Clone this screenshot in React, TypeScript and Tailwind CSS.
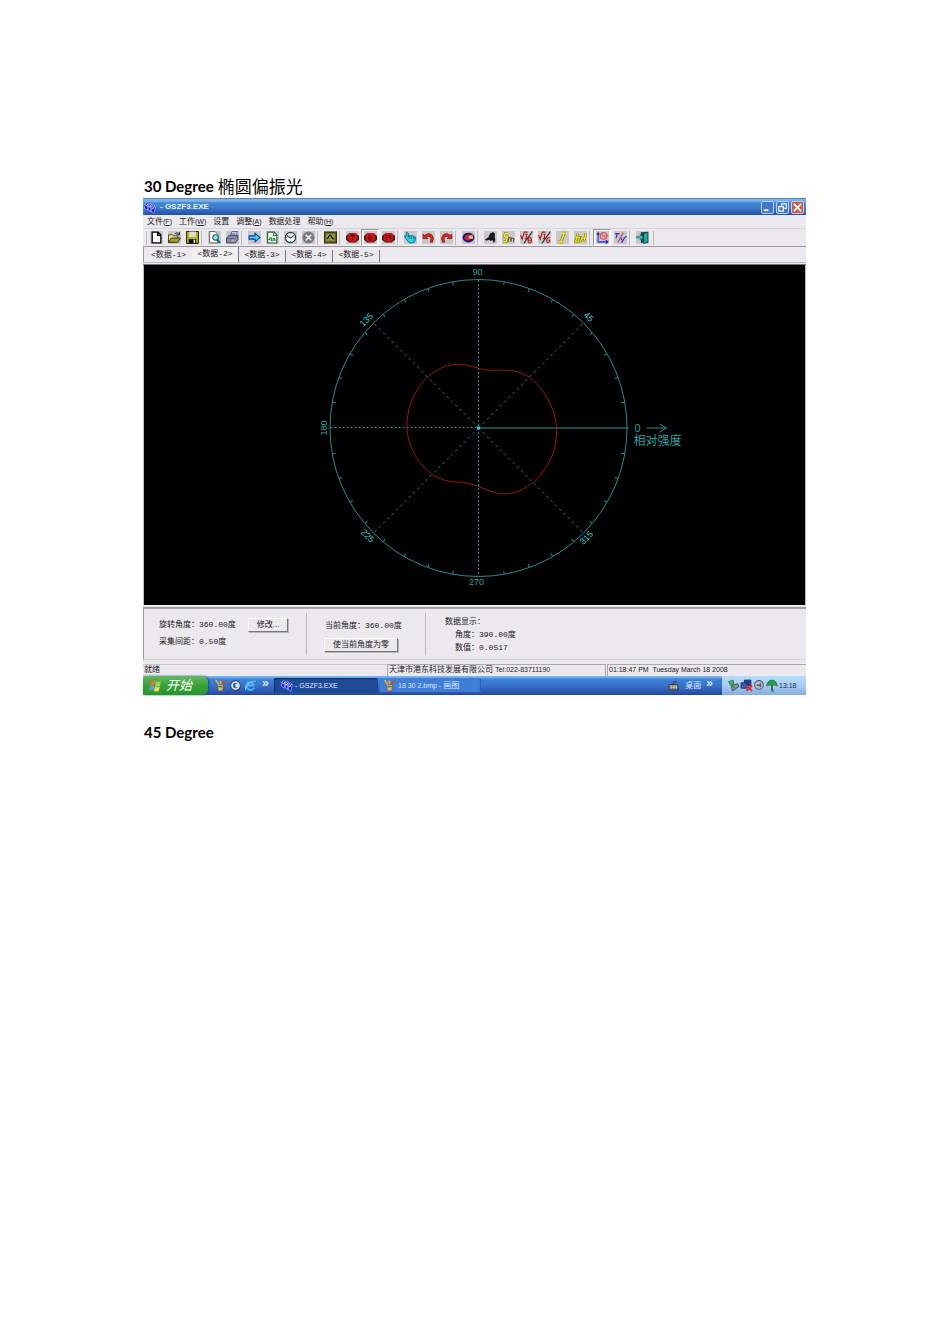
import type { ReactNode } from "react";

const mono = "font-['Liberation_Mono','Noto_Sans_CJK_SC',monospace]";
const sans = "font-['Liberation_Sans','Noto_Sans_CJK_SC',sans-serif]";

function Icon({ children, className = "bg-[#c8c7c9]" }: { children: ReactNode; className?: string }) {
  return (
    <svg viewBox="0 0 24 24" className={"w-[13px] h-[13px] shrink-0 " + className} aria-hidden="true">
      {children}
    </svg>
  );
}

const stop = (
  <>
    <path d="M6 4h12l6 5v7l-6 5H6l-6-5V9z" fill="#222" />
    <path d="M7 4h10l4 4v8l-4 4H7l-4-4V8z" fill="#d80f0f" />
  </>
);

const icons: Record<string, ReactNode> = {
  new: <path d="M4 2h11l5 5v15H4zM14 2v6h6" fill="#fff" stroke="#000" strokeWidth="2.4" />,
  open: (
    <>
      <path d="M1 21V7h7l2 2h8v4" fill="#f4ef7c" stroke="#333" strokeWidth="1.6" />
      <path d="M1 21l5-8h17l-5 8z" fill="#a5a21a" stroke="#222" strokeWidth="1.6" />
      <path d="M13 5q4-4 7 1M21 2v5h-5" fill="none" stroke="#111" strokeWidth="1.6" />
    </>
  ),
  save: (
    <>
      <path d="M1 1h22v22H1z" fill="#b5b50e" stroke="#111" strokeWidth="1.6" />
      <path d="M6 1h12v10H6z" fill="#dcdcdc" />
      <path d="M5 15h14v8H5z" fill="#111" />
      <path d="M14 16h3v6h-3z" fill="#eee" />
    </>
  ),
  preview: (
    <>
      <path d="M3 1h10l5 5v16H3z" fill="#fff" stroke="#555" strokeWidth="1.6" />
      <circle cx="14" cy="12" r="5" fill="#8fe3ea" stroke="#28636e" strokeWidth="2" />
      <path d="M17 16l5 6" stroke="#126675" strokeWidth="4" />
    </>
  ),
  print: (
    <>
      <path d="M8 9l3-8h10l-3 9z" fill="#fff" stroke="#4b4b88" strokeWidth="1.6" />
      <path d="M1 13l5-5h16v8l-5 6H1z" fill="#8d8da8" stroke="#333a66" strokeWidth="1.6" />
      <path d="M2 14h14l5-5M10 4h8M9 7h8" fill="none" stroke="#5252a0" strokeWidth="1.6" />
      <path d="M11 17h4" stroke="#e8e21b" strokeWidth="2" />
    </>
  ),
  go: <path d="M2 9h11V4l9 8-9 8v-5H2z" fill="#39d7f4" stroke="#153a91" strokeWidth="2" />,
  doc: (
    <>
      <path d="M3 2h12l5 5v15H3z" fill="#fff" stroke="#275c2c" strokeWidth="2" />
      <path d="M3 16h4v-3h3v5h3v-4h3v3h4M14 2v6h6" fill="none" stroke="#2b8a34" strokeWidth="2" />
    </>
  ),
  clock: (
    <>
      <circle cx="12" cy="12" r="9.5" fill="#f4fbff" stroke="#333" strokeWidth="2" />
      <path d="M5 8l7 5 6-5" fill="none" stroke="#245" strokeWidth="2" />
      <path d="M12 3v2M12 19v2M3 12h2M19 12h2" stroke="#278" strokeWidth="2" />
    </>
  ),
  cancel: (
    <>
      <circle cx="12" cy="12" r="11" fill="#7b7b7b" />
      <path d="M7 7l10 10M17 7L7 17" stroke="#f3f3f3" strokeWidth="3" />
    </>
  ),
  scope: (
    <>
      <path d="M1 2h22v20H1z" fill="#65651c" stroke="#333312" strokeWidth="2" />
      <path d="M4 5h16v13H4z" fill="#999a44" />
      <path d="M5 14q3 0 4-4 3-5 5 1 1 4 5 4" fill="none" stroke="#171700" strokeWidth="2.4" />
    </>
  ),
  stop1: (
    <>
      {stop}
      <path d="M8 8h8M12 8v8" stroke="#560000" strokeWidth="2" />
    </>
  ),
  stop2: (
    <>
      {stop}
      <path d="M9 8v8h6M10 12h5" fill="none" stroke="#560000" strokeWidth="2" />
    </>
  ),
  stop3: (
    <>
      {stop}
      <path d="M8 8v8M12 9h4v6M8 12h8" fill="none" stroke="#560000" strokeWidth="2" />
    </>
  ),
  hand: (
    <>
      <path d="M4 3q2-2 4 1v7l2-3 3 1 3-1 2 2 3 1v5q0 6-6 6h-5l-7-8-2-5 3 1z" fill="#20d5df" stroke="#086a83" strokeWidth="1.6" />
      <path d="M10 9v5M14 10v5M18 11v4" stroke="#086a83" strokeWidth="1.6" />
    </>
  ),
  undo: <path d="M2 14V6l3 2q7-6 13-1 6 6 1 14l-4-1q3-6 0-9-4-3-7 0l3 3z" fill="#e3261f" stroke="#67100e" strokeWidth="1.2" />,
  redo: <path d="M22 14V6l-3 2q-7-6-13-1-6 6-1 14l4-1q-3-6 0-9 4-3 7 0l-3 3z" fill="#e3261f" stroke="#67100e" strokeWidth="1.2" />,
  ball: (
    <>
      <ellipse cx="12" cy="12" rx="11" ry="9" fill="#26157e" />
      <path d="M4 13q3-9 11-6l4 4-5 6H7z" fill="#c72443" />
      <path d="M12 9l8-3v9l-8-1z" fill="#ef9a30" />
      <path d="M14 11h6v2h-6z" fill="#fff" />
    </>
  ),
  bird: <path d="M2 15l6-3 3-7q5-5 9-1v9l1 4-3 5-2-5-4 1-3-2-5 2z" fill="#16161c" />,
  smooth: (
    <>
      <path d="M11 4H6l-2 7h6l-2 9H2" fill="none" stroke="#77751b" strokeWidth="4.5" />
      <path d="M11 4H6l-2 7h6l-2 9H2" fill="none" stroke="#eeee22" strokeWidth="2.8" />
      <path d="M11 20l2-8 4 1-1 7 2-7 4 1-1 6" fill="none" stroke="#55551c" strokeWidth="2" />
    </>
  ),
  root1: (
    <>
      <path d="M1 8l3 7 4-13h6M10 6h4M12 5v9M9 14h5" fill="none" stroke="#b71c1c" strokeWidth="2.2" />
      <path d="M23 1L7 23" stroke="#222" strokeWidth="2" />
      <ellipse cx="18" cy="17" rx="3" ry="5" fill="none" stroke="#b71c1c" strokeWidth="2" />
      <path d="M15 17h6" stroke="#b71c1c" strokeWidth="2" />
    </>
  ),
  root2: (
    <>
      <path d="M1 8l3 7 4-13h6M10 6h4M12 5v9M9 14h5" fill="none" stroke="#b71c1c" strokeWidth="2.2" />
      <path d="M23 1L7 23" stroke="#222" strokeWidth="2" />
      <path d="M22 13q-5-2-6 4 0 5 4 4l2-4h-3" fill="none" stroke="#b71c1c" strokeWidth="2" />
    </>
  ),
  line: (
    <>
      <path d="M11 4h7M15 4L9 20M5 20h8" stroke="#66661b" strokeWidth="5" />
      <path d="M11 4h7M15 4L9 20M5 20h8" stroke="#f2ee17" strokeWidth="3" />
    </>
  ),
  bar: (
    <>
      <path d="M7 4L3 20h5l2-8H5M15 11l-3 9M22 4l-4 16M15 13h7" fill="none" stroke="#66661b" strokeWidth="4.2" />
      <path d="M7 4L3 20h5l2-8H5M15 11l-3 9M22 4l-4 16M15 13h7" fill="none" stroke="#f2ee17" strokeWidth="2.4" />
    </>
  ),
  polar: (
    <>
      <path d="M4 4v16h17M2 7l2-4 2 4M18 17l4 3-4 3" fill="none" stroke="#2428cd" strokeWidth="2" />
      <circle cx="14" cy="9" r="6" fill="none" stroke="#eb4848" strokeWidth="2" />
      <path d="M10 9h13M11 6l7 7" stroke="#eb4848" strokeWidth="1.6" />
    </>
  ),
  ratio: (
    <>
      <path d="M2 5h8M6 5L4 13M12 12l3 5M20 11l-6 11M22 9v3" fill="none" stroke="#3030ce" strokeWidth="2.2" />
      <path d="M17 3L7 21" stroke="#d63c55" strokeWidth="2" />
    </>
  ),
  exit: (
    <>
      <path d="M9 2h12v20H9z" fill="#1c4c4b" />
      <path d="M14 5l8-3v19l-8 2z" fill="#20a9a5" stroke="#063c3c" strokeWidth="1.4" />
      <path d="M1 10h7V6l5 6-5 5v-4H1z" fill="#26d8d8" stroke="#155" strokeWidth="1" />
    </>
  ),
};

const toolbar = [
  ["new", "open", "save"],
  ["preview", "print"],
  ["go", "doc", "clock", "cancel"],
  ["scope"],
  ["stop1", "stop2", "stop3"],
  ["hand", "undo", "redo"],
  ["ball"],
  ["bird", "smooth", "root1", "root2", "line", "bar"],
  ["polar", "ratio"],
  ["exit"],
];

const menus = [
  ["文件", "F"],
  ["工作", "W"],
  ["设置", ""],
  ["调整", "A"],
  ["数据处理", ""],
  ["帮助", "H"],
];

const tabs = ["<数据-1>", "<数据-2>", "<数据-3>", "<数据-4>", "<数据-5>"];

// measured intensity curve, relative to the pole
const curve = [
  [78, 0], [77.5, 12], [75, 24], [70, 35], [63.5, 45], [55, 54], [41.5, 62.5], [25, 66], [11.5, 63],
  [0, 58.5], [-12, 54.8], [-25, 53.8], [-35, 51.8], [-46, 46.5], [-55.5, 38], [-63, 28], [-69, 14.5],
  [-71.5, 0], [-70.8, -12], [-68, -24], [-62.5, -36], [-51, -51], [-35, -61], [-20, -63.7], [-8.5, -62],
  [0, -59.7], [8.5, -58], [20, -57.8], [31, -57.7], [40, -55.8], [51, -50.5], [63, -38.7], [72.5, -22.7],
  [76.5, -11],
];

function smoothPath(pts: number[][]) {
  const n = pts.length;
  let d = `M${pts[0][0]} ${pts[0][1]}`;
  for (let i = 0; i < n; i++) {
    const [p0, p1, p2, p3] = [pts[(i + n - 1) % n], pts[i], pts[(i + 1) % n], pts[(i + 2) % n]];
    d += `C${p1[0] + (p2[0] - p0[0]) / 6} ${p1[1] + (p2[1] - p0[1]) / 6} `;
    d += `${p2[0] - (p3[0] - p1[0]) / 6} ${p2[1] - (p3[1] - p1[1]) / 6} ${p2[0]} ${p2[1]}`;
  }
  return d + "Z";
}

function PolarChart() {
  const ticks = Array.from({ length: 36 }, (_, i) => i * 10).filter((a) => a % 90 !== 0);
  return (
    <svg viewBox="-334.5 -163 661 340" className="block w-full h-[340px] bg-black" role="img" aria-label="相对强度">
      <g stroke="#278c8c" fill="none">
        <circle r="148.5" />
        {ticks.map((a) => (
          <path key={a} d="M145 0H148.5" transform={`rotate(${a})`} />
        ))}
        <path d="M0 -148V148M-148 -0.5H0" strokeDasharray="2 2" />
        <path d="M0 0L104 -104M0 0L-104 -104M0 0L-104 104M0 0L104 104" strokeDasharray="3 3" stroke="#27807b" />
        <path d="M0 0H150" stroke="#29a0a0" />
        <path d="M168 0H188M181 -4L188 0L181 4" />
      </g>
      <path d={smoothPath(curve)} fill="none" stroke="#9c1717" />
      <path d="M-1.5 -1.5h3v3h-3z" fill="#35c8c8" />
      <g fill="#2aa3a3" fontSize="9" textAnchor="middle" className={sans}>
        <text x="-1" y="-153">90</text>
        <text x="-2" y="157">270</text>
        <text transform="translate(-152 0) rotate(-90)">180</text>
        <text transform="translate(-110 -106) rotate(-45)" fill="#35c8c8">135</text>
        <text transform="translate(108 -109) rotate(45)" fill="#35c8c8">45</text>
        <text transform="translate(-113 110) rotate(45)" fill="#35c8c8">225</text>
        <text transform="translate(110 112) rotate(-45)" fill="#35c8c8">315</text>
      </g>
      <g fill="#2aa3a3" className={sans}>
        <text x="156" y="4" fontSize="11">0</text>
        <text x="155" y="17" fontSize="12">相对强度</text>
      </g>
    </svg>
  );
}

function AppLogo() {
  return (
    <Icon className="">
      <path d="M2 7l6-5 3 4-2 11-6-3zM8 9l6-5 3 4-2 12-6-4zM14 11l6-4 3 4-3 12-6-5z" fill="#1a1ad8" stroke="#c6dcfa" strokeWidth="1" />
      <path d="M4 7l3 2 2-4M10 10l3 1 2-5M16 13l3 1 2-5" fill="none" stroke="#e6f1ff" strokeWidth="1.6" />
    </Icon>
  );
}

function PaintIcon() {
  return (
    <Icon className="">
      <path d="M6 10h12l-2 12H8z" fill="#d5bb8a" stroke="#6d5330" strokeWidth="1.4" />
      <path d="M9 10L3 2M12 10V3" stroke="#e6b13c" strokeWidth="3" />
      <path d="M15 10l6-7" stroke="#cd4331" strokeWidth="3" />
      <path d="M8 14h8" stroke="#3b875c" strokeWidth="3" />
    </Icon>
  );
}

function PushButton({ children }: { children: ReactNode }) {
  return (
    <button className={"h-[14px] px-[8px] border border-t-white border-l-white border-r-[#77767a] border-b-[#77767a] bg-[#ebe9ed] shadow-[1px_1px_0_#b9b8bc] flex items-center whitespace-nowrap " + sans}>
      {children}
    </button>
  );
}

const captionButton = "w-[13px] h-[13px] rounded-[2px] border border-[#b9d3f5] flex items-center justify-center";

export default function App() {
  return (
    <main className="bg-white text-black pt-[176px] pl-[143px] pr-[144px] pb-16">
      <h1 className="h-[20px] mb-[2px] pl-px flex items-center gap-1 text-[15px] font-bold font-[Lato,sans-serif] whitespace-nowrap">
        30 Degree <span className="text-[17px] font-normal font-['Noto_Sans_CJK_SC',sans-serif]">椭圆偏振光</span>
      </h1>

      <section className={"bg-[#ebe9ed] text-[8px] leading-[10px] text-[#222] " + sans}>
        {/* title bar */}
        <header className="h-[17px] flex items-center gap-[2px] pr-[2px] bg-linear-to-b from-[#4b83c9] via-[#3d7fd0] to-[#2450a4] border-t border-[#5c7fb4] shadow-[inset_0_3px_2px_#79b6f0]">
          <AppLogo />
          <span className="flex-1 pl-[2px] font-bold text-[#e6f0ff]">- GSZF3.EXE</span>
          <button aria-label="Minimize" className={captionButton + " bg-[#4278cc]"}>
            <svg viewBox="0 0 12 12" className="w-[11px] h-[11px]"><path d="M2 9h5" stroke="#fff" strokeWidth="2" /></svg>
          </button>
          <button aria-label="Restore" className={captionButton + " bg-[#4278cc]"}>
            <svg viewBox="0 0 12 12" className="w-[11px] h-[11px]"><path d="M5 4V2h5v5H8M2 5h5v5H2z" fill="none" stroke="#fff" strokeWidth="1.2" /></svg>
          </button>
          <button aria-label="Close" className={captionButton + " bg-[#d6593f]"}>
            <svg viewBox="0 0 12 12" className="w-[11px] h-[11px]"><path d="M2 2l8 8M10 2l-8 8" stroke="#fff" strokeWidth="2" /></svg>
          </button>
        </header>

        <nav className="h-[13px] flex items-center gap-[7px] pl-[4px]">
          {menus.map(([name, key]) => (
            <button key={name} className="whitespace-nowrap">
              {name}
              {key && <span className="text-[7px]">(<u>{key}</u>)</span>}
            </button>
          ))}
        </nav>

        {/* toolbar */}
        <div className="h-[19px] flex items-center pl-[3px] border-t border-t-[#d5d4d7] border-b border-b-[#99989c]">
          {toolbar.map((group, i) => (
            <div key={i} className="flex items-center">
              <span className={i === 0 ? "w-px h-[14px] bg-[#bbbabd]" : "w-[4px] h-[14px] border-l border-[#bbbabd]"} />
              {group.map((name) => (
                <button
                  key={name}
                  aria-label={name}
                  className={
                    "w-[18px] h-[17px] flex items-center justify-center " +
                    (name === "stop2" || name === "polar" ? "border border-t-[#99989c] border-l-[#99989c] border-r-white border-b-white bg-[#f6f5f7]" : "")
                  }
                >
                  <Icon>{icons[name]}</Icon>
                </button>
              ))}
            </div>
          ))}
          <span className="w-px h-[14px] ml-[2px] bg-[#bbbabd]" />
        </div>

        <div role="tablist" className={"h-[15px] flex pl-px border-l border-[#99989c] " + mono}>
          {tabs.map((tab, i) => (
            <button
              key={tab}
              role="tab"
              aria-selected={i === 1}
              className={
                "w-[47px] flex justify-center whitespace-nowrap " +
                (i === 1 ? "pt-[2px] bg-[#f0eff2] border-r border-[#77767a]" : "pt-[3px]")
              }
            >
              <span className={i > 1 ? "flex-1 border-r border-[#77767a]" : ""}>{tab}</span>
            </button>
          ))}
        </div>

        <div className="h-[3px] border-t border-t-[#bbbabd] border-b border-b-[#77767a]" />
        <div className="px-px bg-[#bbbabd]">
          <PolarChart />
        </div>
        <div className="h-[3px] border-b border-[#99989c]" />

        {/* readings */}
        <div className={"h-[52px] flex items-center border-l border-b border-l-[#99989c] border-b-[#d5d4d7] border-t border-t-[#aaa9ad] " + mono}>
          <div className="w-[163px] h-[42px] pl-[15px] flex flex-col gap-[5px] pt-[5px] border-r border-[#bbbabd]">
            <div className="flex items-center gap-[12px] whitespace-nowrap">
              旋转角度：360.00度 <PushButton>修改...</PushButton>
            </div>
            <div>采集间距：0.50度</div>
          </div>
          <div className="w-[119px] h-[42px] pl-[17px] pt-[8px] flex flex-col items-start gap-[7px] border-r border-[#bbbabd] whitespace-nowrap">
            <div className="pl-[1px]">当前角度：360.00度</div>
            <PushButton>使当前角度为零</PushButton>
          </div>
          <div className="h-[42px] pl-[19px] pt-[4px] flex flex-col gap-[3px] whitespace-nowrap">
            <div>数据显示：</div>
            <div className="pl-[10px]">角度：390.00度</div>
            <div className="pl-[10px]">数值：0.0517</div>
          </div>
        </div>

        <footer className="h-[16px] pt-[4px] flex whitespace-nowrap">
          <div className="w-[244px] pl-[1px] border-t border-[#c8c7c9]">就绪</div>
          <div className="w-[219px] mr-px pl-px border-l border-t border-r border-[#aaa9ad]">
            天津市港东科技发展有限公司 <span className="text-[7px]">Tel:022-83711190</span>
          </div>
          <div className="flex-1 pl-px border-l border-t border-[#aaa9ad] text-[7px]">01:18:47 PM&nbsp; Tuesday March 18 2008</div>
        </footer>

        {/* taskbar */}
        <div className="h-[19px] flex items-center text-[#dceaff] bg-linear-to-b from-[#3e87dc] via-[#3973cc] to-[#24479c] shadow-[inset_0_2px_2px_#7cb8f2]">
          <button className="w-[65px] h-full pl-[6px] flex items-center gap-[4px] rounded-r-[6px] bg-linear-to-b from-[#62b862] via-[#35a235] to-[#2a962a] text-[13px] italic text-white shadow-[1px_0_2px_#1e4d8c]">
            <svg viewBox="0 0 24 24" className="w-[13px] h-[13px]" aria-hidden="true">
              <path d="M4 3q4-2 8 0l-2 9q-4-2-8 0z" fill="#ee6a3a" />
              <path d="M13 4q4 2 9 0l-2 9q-5 2-9 0z" fill="#8fdb52" />
              <path d="M2 13q4-2 8 0l-2 8q-4-2-8 0z" fill="#5ba3f5" />
              <path d="M11 14q4 2 9 0l-2 8q-5 2-9 0z" fill="#f8d648" />
            </svg>
            开始
          </button>
          <div className="w-[66px] pl-[6px] flex items-center gap-[2px]">
            <PaintIcon />
            <Icon className="">
              <circle cx="12" cy="12" r="9" fill="#e8eff7" stroke="#26466f" strokeWidth="2" />
              <circle cx="12" cy="12" r="5" fill="#3f62a9" />
              <path d="M12 9h5v6h-5z" fill="#f2e9c4" />
            </Icon>
            <Icon className="">
              <path d="M19 17q-7 6-12 1t0-11q7-5 11 5H7" fill="none" stroke="#40bdf6" strokeWidth="3.4" />
              <path d="M3 20Q1 13 12 7t9-2" fill="none" stroke="#a5e0fc" strokeWidth="1.5" />
            </Icon>
            <span className="pl-[3px] pb-[6px] text-[12px] font-bold">»</span>
          </div>
          <button className="w-[104px] h-[15px] pl-[6px] mr-[2px] flex items-center gap-[2px] rounded-[2px] bg-[#1f4a96] shadow-[inset_1px_1px_1px_#12306a] text-[7px]">
            <AppLogo />
            - GSZF3.EXE
          </button>
          <button className="w-[101px] h-[15px] pl-[3px] flex items-center gap-[2px] rounded-[2px] bg-[#3f7ed6] shadow-[inset_-1px_-1px_1px_#2a5bb0] text-[7px] whitespace-nowrap">
            <PaintIcon />
            <span>18 30 2.bmp - <span className="text-[8px]">画图</span></span>
          </button>
          <div className="ml-auto flex items-center gap-[5px] pr-[9px]">
            <Icon className="">
              <path d="M4 10h16v10H4z" fill="#cac7b6" stroke="#383e4a" strokeWidth="2" />
              <path d="M6 13h12M6 17h12" stroke="#454b52" strokeWidth="2" strokeDasharray="2 1" />
              <path d="M12 9V5h6" fill="none" stroke="#383e4a" strokeWidth="2" />
            </Icon>
            桌面
            <span className="pb-[6px] text-[12px] font-bold">»</span>
          </div>
          <div className="w-[84px] h-full pl-[5px] flex items-center text-[#1c2c44] bg-linear-to-b from-[#b5dcfa] via-[#a9ccf2] to-[#86ace0]">
            <Icon className="">
              <path d="M3 5l8-3 2 6-6 4z" fill="#51b257" stroke="#27663a" strokeWidth="1.4" />
              <path d="M8 12l12-3 2 5-12 8z" fill="#8d979f" stroke="#364154" strokeWidth="1.6" />
              <path d="M6 10l9 7" stroke="#39994a" strokeWidth="3" />
            </Icon>
            <Icon className="">
              <path d="M8 2h12v10H8z" fill="#263f9c" stroke="#18275d" strokeWidth="1.6" />
              <path d="M2 7h11v10H2z" fill="#3f61ba" stroke="#18275d" strokeWidth="1.6" />
              <path d="M12 12l10 10M22 12L12 22" stroke="#e02a2f" strokeWidth="3.4" />
            </Icon>
            <Icon className="">
              <circle cx="11" cy="11" r="8" fill="#b9c2ca" stroke="#505b69" strokeWidth="2" />
              <path d="M7 10h4l4-4v10l-4-3H7z" fill="#59636f" />
            </Icon>
            <Icon className="">
              <path d="M1 13Q3 2 11 2t10 11q-5-3-10-1-5-2-10 1z" fill="#22a34c" stroke="#126b31" strokeWidth="1.2" />
              <path d="M11 12v8q0 3 3 2" fill="none" stroke="#126b31" strokeWidth="3" />
            </Icon>
            <time className="text-[7px]">13:18</time>
          </div>
        </div>
      </section>

      <h2 className="mt-[26px] h-[22px] pl-px flex items-center text-[15px] font-bold font-[Lato,sans-serif]">45 Degree</h2>
    </main>
  );
}
